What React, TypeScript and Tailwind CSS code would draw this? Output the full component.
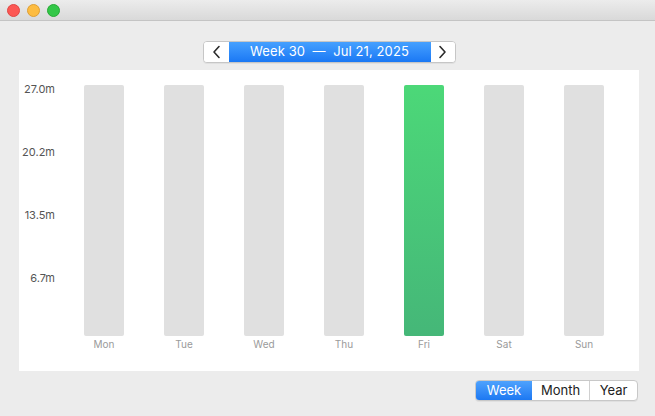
import React from 'react'

const days = ['Mon', 'Tue', 'Wed', 'Thu', 'Fri', 'Sat', 'Sun']
const ticks = [
  { label: '27.0m', top: 13 },
  { label: '20.2m', top: 76 },
  { label: '13.5m', top: 139 },
  { label: '6.7m', top: 202 },
]

const Chevron: React.FC<{ dir: 'left' | 'right' }> = ({ dir }) => (
  <svg width="9" height="14" viewBox="0 0 9 14" fill="none">
    <path
      d={dir === 'left' ? 'M7 1.5 L2 7 L7 12.5' : 'M2 1.5 L7 7 L2 12.5'}
      stroke="#2b2b2b"
      strokeWidth="1.6"
      strokeLinecap="round"
      strokeLinejoin="round"
    />
  </svg>
)

export default function App() {
  return (
    <div
      className="w-[655px] h-[416px] bg-[#ececec] flex flex-col overflow-hidden"
      style={{ fontFamily: '"Helvetica Neue", Inter, "Liberation Sans", sans-serif' }}
    >
      {/* title bar */}
      <div className="h-[21px] shrink-0 bg-gradient-to-b from-[#ececec] to-[#d9d9d9] border-b border-[#c4c4c4] flex items-center gap-[7px] pl-[7px]">
        <span className="w-[13px] h-[13px] rounded-full bg-[#fc5753] border border-[#df4744]" />
        <span className="w-[13px] h-[13px] rounded-full bg-[#fdbc40] border border-[#de9f34]" />
        <span className="w-[13px] h-[13px] rounded-full bg-[#33c748] border border-[#27aa35]" />
      </div>

      {/* week navigator */}
      <div className="flex justify-center mt-[20px] pl-[3px]">
        <div className="flex h-[22px] rounded-[4px] border border-[#c6c6c6] bg-white shadow-[0_1px_0_rgba(0,0,0,0.05)] overflow-hidden">
          <button className="w-[25px] flex items-center justify-center bg-white">
            <Chevron dir="left" />
          </button>
          <div className="w-[202px] flex items-center justify-center bg-gradient-to-b from-[#45a0ff] to-[#1a78f4] text-white text-[13px] tracking-[0.1px]">
            Week 30&nbsp;&nbsp;—&nbsp;&nbsp;Jul 21, 2025
          </div>
          <button className="w-[24px] flex items-center justify-center bg-white">
            <Chevron dir="right" />
          </button>
        </div>
      </div>

      {/* chart panel */}
      <div className="mx-[19px] mt-[7px] w-[620px] h-[301px] bg-white relative">
        {ticks.map((t) => (
          <div
            key={t.label}
            className="absolute left-0 w-[36px] text-right text-[11px] leading-[13px] text-[#555]"
            style={{ top: t.top }}
          >
            {t.label}
          </div>
        ))}
        <div className="grid grid-cols-7 w-[560px] ml-[45px] pt-[15px]">
          {days.map((d) => (
            <div key={d} className="flex flex-col items-center">
              <div
                className={
                  d === 'Fri'
                    ? 'w-[40px] h-[251px] rounded-[2px] bg-gradient-to-b from-[#4cd878] to-[#45b778]'
                    : 'w-[40px] h-[251px] rounded-[2px] bg-[#e0e0e0]'
                }
              />
              <div className="mt-[1px] text-[10px] leading-[14px] text-[#9a9a9a]">{d}</div>
            </div>
          ))}
        </div>
      </div>

      {/* range picker */}
      <div className="flex justify-end mt-[9px] pr-[17px]">
        <div className="flex h-[21px] rounded-[4px] border border-[#c8c8c8] bg-white text-[13px] overflow-hidden shadow-[0_1px_0_rgba(0,0,0,0.05)]">
          <div className="w-[56px] flex items-center justify-center bg-gradient-to-b from-[#4ea2fd] to-[#1c78f2] text-white">
            Week
          </div>
          <div className="w-[58px] flex items-center justify-center text-[#222] border-r border-[#d0d0d0]">
            Month
          </div>
          <div className="w-[47px] flex items-center justify-center text-[#222]">Year</div>
        </div>
      </div>
    </div>
  )
}
